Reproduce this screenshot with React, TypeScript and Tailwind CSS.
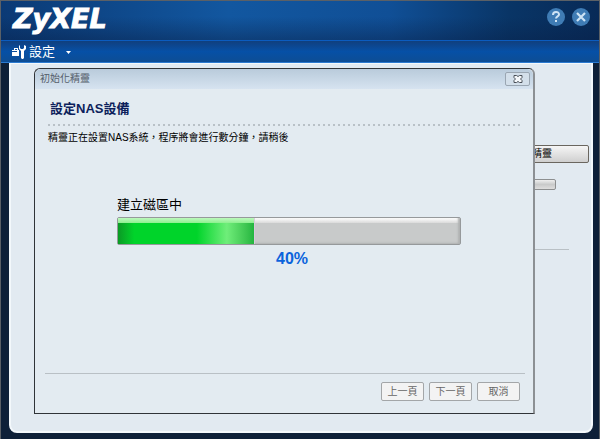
import type { ReactNode } from "react";

const PROGRESS = 40;

function ToolIcon() {
  return (
    <svg width="14" height="14" viewBox="0 0 14 14" fill="white">
      {/* Toolbox */}
      <path d="M2 3h4v2h1v6H0V5h2zM3 4v1h2V4z" fillRule="evenodd" />
      <path d="M0 6h5v1H0z" fill="#0b4d9b" />
      {/* Wrench */}
      <path d="M8 0v3l1 1h2l1-1V0l2 1v3l-2 2v7l-1 1h-1l-1-1V6L7 4V1z" />
    </svg>
  );
}

function HeaderButton({ label, children }: { label: string; children: ReactNode }) {
  return (
    <button type="button" aria-label={label} className="h-[18px] w-[18px]">
      <svg width="18" height="18" viewBox="0 0 18 18" fill="none">
        <circle cx="9" cy="9" r="9" fill="#3f7cb5" />
        {children}
      </svg>
    </button>
  );
}

function WizardButton({ children }: { children: ReactNode }) {
  return (
    <button
      type="button"
      className="h-[19px] w-[43px] rounded-xs border border-[#a3a6a8] bg-[#f3f3f3] text-[10px] leading-4 text-[#666]"
    >
      {children}
    </button>
  );
}

function Wizard() {
  return (
    <section
      role="dialog"
      aria-labelledby="wizard-title"
      className="absolute inset-y-0 right-14 left-[23px] mt-1 mb-[17px] flex flex-col rounded-t-md border border-r-2 border-[#303438] border-r-[#8c9094] bg-[#e3ebf1]"
    >
      {/* Title bar */}
      <div className="flex h-5 shrink-0 items-center justify-between rounded-t-md bg-linear-to-b from-[#b9cbdb] to-[#d6e3f0] pr-[3px] pl-[5px]">
        <h1 id="wizard-title" className="text-[10px] leading-4 text-[#55606b]">
          初始化精靈
        </h1>
        <button
          type="button"
          aria-label="關閉"
          className="flex h-3.5 w-[25px] items-center justify-center rounded-xs border border-[#9aa6b2] bg-[#d3dfea]"
        >
          <svg width="10" height="8" viewBox="0 0 10 8">
            <path
              d="M1 .5h2.500L5 1.500 6.500 .5H9v2L7.500 4 9 5.500v2H6.500L5 6.500 3.500 7.500H1v-2L2.500 4 1 2.500z"
              fill="#f4f7fa"
              stroke="#4a5058"
            />
          </svg>
        </button>
      </div>

      {/* Step heading */}
      <div className="px-[13px] pt-2.5">
        <h2 className="pl-0.5 text-[13px] leading-5 font-bold text-[#0d1f5c]">設定NAS設備</h2>
        <svg width="100%" height="2" className="mt-[5px] block">
          <line x1="0" y1="1" x2="100%" y2="1" stroke="#b9c1c7" strokeWidth="2" strokeDasharray="2 3" />
        </svg>
        <p className="mt-1 text-[10px] leading-4 text-black">
          精靈正在設置NAS系統，程序將會進行數分鐘，請稍後
        </p>
      </div>

      {/* Progress */}
      <div className="mt-[49px] pr-[72px] pl-[82px]">
        <p className="text-[13px] leading-5 text-black">建立磁區中</p>
        <div
          role="progressbar"
          aria-valuenow={PROGRESS}
          aria-valuemin={0}
          aria-valuemax={100}
          className="mt-0.5 h-7 rounded-xs border border-[#96999b] bg-linear-to-b from-white from-0% via-[#dcdcdc] via-18% to-[#c8caca] to-18% shadow-[inset_-2px_-1px_2px_#b0b2b2]"
        >
          <div
            className="h-full border-r border-[#d9c9dc] bg-linear-to-r from-[#0a9a25] from-0% via-[#00d42a] via-12% to-[#00d42a] to-50%"
            style={{ width: `${PROGRESS}%` }}
          >
            <div className="h-full bg-linear-to-r from-transparent from-58% via-[#6fee7a] via-80% to-[#22b53f]">
              <div className="h-[5px] bg-linear-to-b from-[#bdf8bd] to-[#8cf08f]" />
            </div>
          </div>
        </div>
        <p className="mt-1 pl-1.5 text-center text-base leading-5 font-bold text-[#0b63dc]">{PROGRESS}%</p>
      </div>

      {/* Actions */}
      <div className="mt-auto mr-2 mb-3 ml-2.5 flex justify-end gap-[5px] border-t border-[#b9c0c5] pt-2 pr-[5px]">
        <WizardButton>上一頁</WizardButton>
        <WizardButton>下一頁</WizardButton>
        <WizardButton>取消</WizardButton>
      </div>
    </section>
  );
}

export default function App() {
  return (
    <div className="flex min-h-screen flex-col border-x border-t border-[#5b6066] bg-[#0e2038] font-['Liberation_Sans','Noto_Sans_CJK_TC',sans-serif]">
      {/* Header */}
      <header className="flex h-[39px] items-center justify-between bg-[linear-gradient(180deg,#ffffff00_40%,#08204870),linear-gradient(90deg,#0b3a75,#1257a0_38%,#104f96_65%,#093566_85%,#082a57)] pr-[9px] pl-3">
        <div className="pb-1 font-['DejaVu_Sans',sans-serif] text-[27px] leading-8 font-bold text-white italic [-webkit-text-stroke:1px_white]">
          ZyXEL
        </div>
        <div className="flex gap-[7px] pb-[7px]">
          <HeaderButton label="說明">
            <path d="M6 7c0-4 6-4 6-.5C12 8.500 9 8.300 9 10.500" stroke="#cfe4f5" strokeWidth="2" />
            <path d="M8 12h2v2H8z" fill="#cfe4f5" />
          </HeaderButton>
          <HeaderButton label="關閉">
            <path d="m5 5 8 8m0-8-8 8" stroke="#cfe4f5" strokeWidth="2.200" />
          </HeaderButton>
        </div>
      </header>

      {/* Menu bar */}
      <nav className="flex h-[23px] items-center border-t border-b border-t-[#0b5cc0] border-b-[#2b7ad0] bg-linear-to-b from-[#0f3f7e] via-[#0650a6] via-50% to-[#0d4d94] pl-[11px]">
        <button type="button" className="flex items-center text-[13px] leading-5 text-white">
          <ToolIcon />
          <span className="ml-[3px]">設定</span>
          <svg width="5" height="3" viewBox="0 0 5 3" fill="white" className="mt-0.5 ml-[11px]">
            <path d="M0 0h5L2.500 3z" />
          </svg>
        </button>
      </nav>

      {/* Page behind the wizard */}
      <main className="relative mr-1.5 mb-1.5 ml-2 flex flex-1 flex-col rounded-b-lg border-2 border-t border-[#f3f8fb] bg-[#e2eaf1] pt-[81px] pr-0.5">
        <button
          type="button"
          className="h-[18px] w-24 self-end rounded-xs border border-[#6a665f] bg-linear-to-b from-[#f6f6f6] to-[#cfcfcf] pr-9 text-right text-[10px] leading-4 text-black"
        >
          初始化精靈
        </button>
        <div className="mt-4 mr-[33px] h-[11px] w-24 self-end rounded-xs border border-[#8d8f90] bg-linear-to-b from-[#efefef] via-[#c9caca] to-[#dedede]" />
        <hr className="mt-[59px] mr-5 ml-8 border-[#b9c0c5]" />
        <Wizard />
      </main>
    </div>
  );
}
